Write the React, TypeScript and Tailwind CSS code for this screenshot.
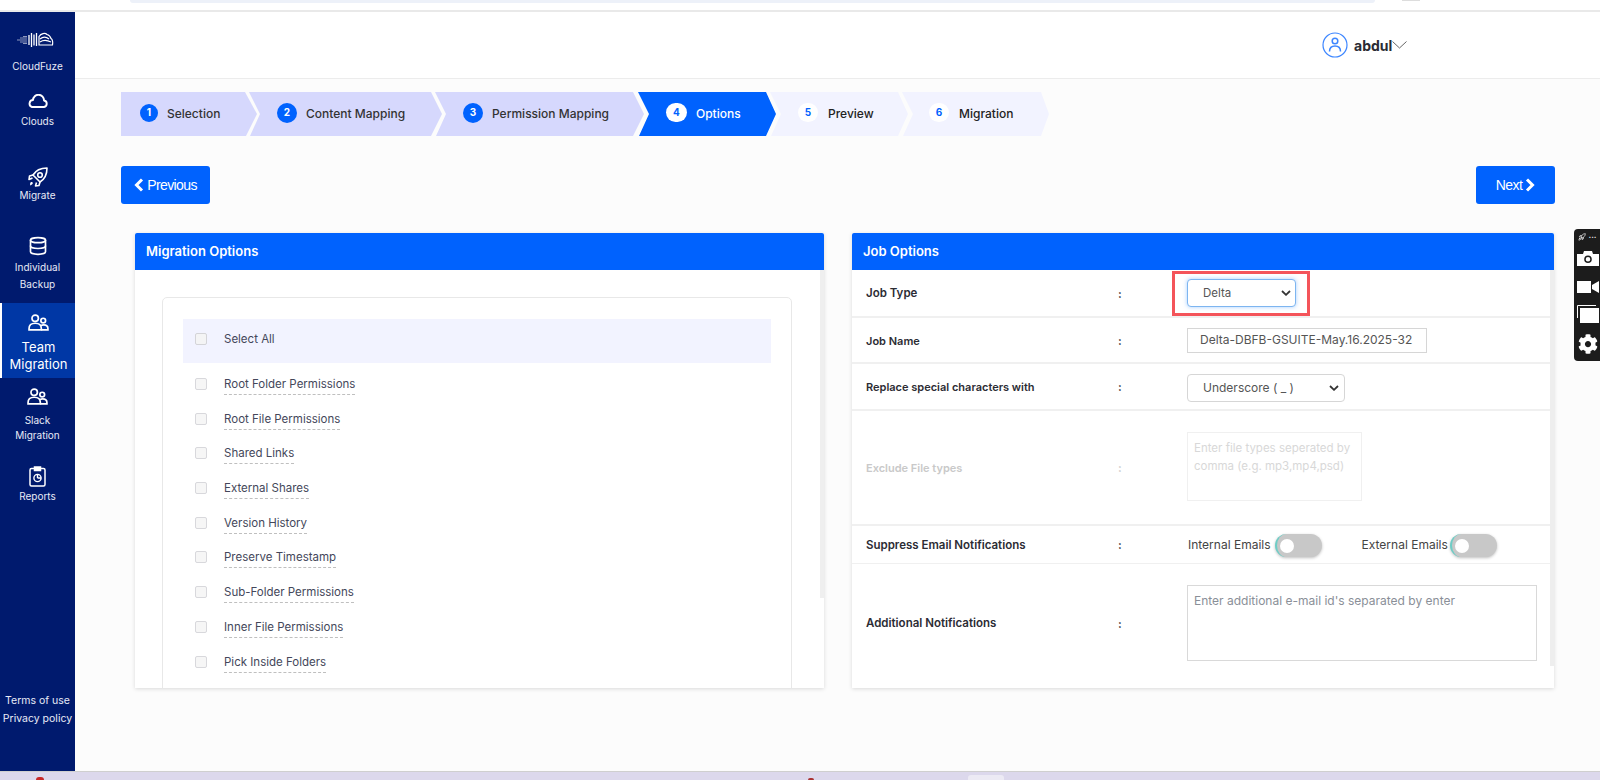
import { Database, Rocket } from "lucide-react";
import { FaCog } from "react-icons/fa";

const steps = [
  { n: 1, label: "Selection", cls: "w-[136px] pl-[19px] bg-[#d6d8fd] [clip-path:polygon(0_0,124px_0,136px_50%,125px_100%,0_100%)]", badge: "w-[18px] h-[18px] bg-[#0062fe] text-white", gap: "ml-[9px]", text: "text-[#333]" },
  { n: 2, label: "Content Mapping", cls: "w-[193px] -ml-[8px] pl-[28px] bg-[#d6d8fd] [clip-path:polygon(0_0,182px_0,193px_50%,182px_100%,1px_100%,11px_50%)]", badge: "w-[20px] h-[20px] bg-[#0062fe] text-white", gap: "ml-[9px]", text: "text-[#333]" },
  { n: 3, label: "Permission Mapping", cls: "w-[209px] -ml-[7px] pl-[28px] bg-[#d6d8fd] [clip-path:polygon(0_0,198px_0,209px_50%,198px_100%,1px_100%,11px_50%)]", badge: "w-[20px] h-[20px] bg-[#0062fe] text-white", gap: "ml-[9px]", text: "text-[#333]" },
  { n: 4, label: "Options", cls: "w-[138px] -ml-[6px] pl-[28px] bg-[#0062fe] [clip-path:polygon(0_0,128px_0,138px_50%,128px_100%,1px_100%,11px_50%)]", badge: "w-[21px] h-[19px] bg-white text-[#0062fe]", gap: "ml-[9px]", text: "text-white" },
  { n: 5, label: "Preview", cls: "w-[138px] -ml-[6px] pl-[28px] bg-[#f2f3ff] [clip-path:polygon(0_0,128px_0,138px_50%,128px_100%,1px_100%,11px_50%)]", badge: "w-[20px] h-[19px] bg-white text-[#0062fe]", gap: "ml-[10px]", text: "text-[#222]" },
  { n: 6, label: "Migration", cls: "w-[147px] -ml-[6px] pl-[27px] bg-[#f2f3ff] [clip-path:polygon(0_0,139px_0,147px_50%,139px_100%,1px_100%,11px_50%)]", badge: "w-[20px] h-[19px] bg-white text-[#0062fe]", gap: "ml-[10px]", text: "text-[#222]" },
];

const options = [
  "Root Folder Permissions",
  "Root File Permissions",
  "Shared Links",
  "External Shares",
  "Version History",
  "Preserve Timestamp",
  "Sub-Folder Permissions",
  "Inner File Permissions",
  "Pick Inside Folders",
];

function Logo() {
  return (
    <svg className="mr-[6px]" width="38" height="16" viewBox="0 0 38 16" fill="none" stroke="white" strokeWidth="1">
      <path d="M1 8h10M4 6h7M4 10h7M7 4.500h4M7 11.500h4" strokeWidth="0.7" opacity="0.8" />
      <path d="M13 3v10M15.500 1v14M18 2.500v11M20.500 1v13" strokeWidth="1.300" />
      <path d="M23 13V4.500C25 1.500 29 0.500 31 2.500c2 0.500 3.500 2.500 4 4 1.500 1 2 3.500 1.500 6.500z" strokeWidth="1.200" />
      <path d="M24 7c3-2.500 6-2.500 9 0M24 10c3-2 7-2 11 0" strokeWidth="1.100" />
    </svg>
  );
}

function CloudIcon() {
  return (
    <svg width="21" height="14" viewBox="0 0 21 14" fill="none" stroke="white" strokeWidth="1.900" strokeLinejoin="round">
      <path d="M5 13h12a3.300 3.300 0 0 0 0-6.500A5.500 5.500 0 0 0 6 6 3.600 3.600 0 0 0 5 13z" />
    </svg>
  );
}

function RocketIcon() {
  return (
    <svg width="20" height="20" viewBox="0 0 20 20" fill="none" stroke="white" strokeWidth="1.600" strokeLinejoin="round">
      <path d="M19 1C13 1 8 3 5 8l7 7c5-3 7-8 7-14z" />
      <circle cx="12" cy="8" r="2.300" />
      <path d="M5 8L1.500 9 1 12.500 4.500 11M12 15l-1 3.500-3.500.5 1-3.500" />
      <path d="M2.500 15.500c1-.8 2-.5 2.300.2.300.700-.3 1.800-2.800 2.800.4-1.200-.2-2 .5-3z" fill="white" stroke="none" />
    </svg>
  );
}

function TeamIcon() {
  return (
    <svg width="21" height="17" viewBox="0 0 22 18" fill="none" stroke="white" strokeWidth="1.800">
      <circle cx="7.500" cy="4.500" r="3.400" />
      <circle cx="16" cy="7" r="2.500" />
      <path d="M1 16.800v-1.500c0-3.500 2.500-5.500 6.500-5.500s6.500 2 6.500 5.500v1.500z" />
      <path d="M14 16.800h7v-1.300c0-2.500-1.800-4-4.500-4-1.200 0-2.200 0.300-3 0.800" />
    </svg>
  );
}

function ReportIcon() {
  return (
    <svg width="17" height="21" viewBox="0 0 17 21" fill="none" stroke="white" strokeWidth="1.500">
      <rect x="1" y="2.500" width="15" height="17.500" rx="1.500" />
      <path d="M5.500 1h6v3.500h-6z" fill="white" />
      <circle cx="8.500" cy="12" r="3.600" strokeWidth="1.400" />
      <path d="M8.500 12V8.400M8.500 12h3.600" strokeWidth="1.400" />
    </svg>
  );
}

function SideItem({ icon, lines, cls }: { icon: React.ReactNode; lines: string[]; cls: string }) {
  return (
    <div className={`flex flex-col items-center text-white ${cls}`}>
      {icon}
      <div className="flex flex-col items-center text-[10px] text-[#e8eaf6]">
        {lines.map((line) => (
          <span key={line}>{line}</span>
        ))}
      </div>
    </div>
  );
}

function Sidebar() {
  return (
    <aside className="w-[75px] h-full bg-[#001a6e] flex flex-col shrink-0">
      <SideItem icon={<Logo />} lines={["CloudFuze"]} cls="pt-[20px] h-[77px] gap-[10px] leading-[17px]" />
      <SideItem icon={<CloudIcon />} lines={["Clouds"]} cls="pt-[5px] h-[70px] gap-[5px] leading-[17px]" />
      <SideItem icon={<RocketIcon />} lines={["Migrate"]} cls="pt-[8px] h-[62px] leading-[17px]" />
      <SideItem icon={<Database size={20} strokeWidth={2} />} lines={["Individual", "Backup"]} cls="pt-[15px] h-[82px] gap-[3px] leading-[17px]" />
      <div className="h-[75px] bg-[#0037a5] border-l-2 border-white flex flex-col items-center pt-[11px] text-white">
        <TeamIcon />
        <span className="text-[13px] leading-[17px] mt-[8px]">Team</span>
        <span className="text-[13px] leading-[17px]">Migration</span>
      </div>
      <SideItem icon={<TeamIcon />} lines={["Slack", "Migration"]} cls="pt-[10px] h-[75px] gap-[8px] leading-[15px]" />
      <SideItem icon={<ReportIcon />} lines={["Reports"]} cls="pt-[13px] h-[70px] gap-[1px] leading-[17px]" />
      <div className="mt-auto mb-[43px] flex flex-col items-center text-[10.500px] leading-[18px] text-[#e8eaf6]">
        <span>Terms of use</span>
        <span>Privacy policy</span>
      </div>
    </aside>
  );
}

function Header() {
  return (
    <header className="h-[67px] bg-white border-b border-[#ececec] flex items-center pl-[1247px]">
      <svg width="26" height="26" viewBox="0 0 26 26" fill="none" stroke="#3d86ff" strokeWidth="1.200">
        <circle cx="13" cy="13" r="12" />
        <circle cx="13" cy="9" r="2.800" strokeWidth="1.500" />
        <path d="M7.500 19.500c0-3.500 2-5.500 5.500-5.500s5.500 2 5.500 5.500" strokeWidth="1.500" />
      </svg>
      <span className="ml-[6px] text-[14px] font-bold text-[#2b2b33]">abdul</span>
      <svg width="15" height="8" viewBox="0 0 15 8" fill="none" stroke="#666" strokeWidth="1">
        <path d="M0.500 0.500L7.500 7L14.500 0.500" />
      </svg>
    </header>
  );
}

function Stepper() {
  return (
    <div className="flex ml-[46px] mt-[13px] h-[44px]">
      {steps.map((s) => (
        <div key={s.n} className={`h-full flex items-center ${s.cls}`}>
          <span className={`rounded-full flex items-center justify-center text-[10px] font-bold -mt-[3px] shrink-0 ${s.badge}`}>{s.n}</span>
          <span className={`text-[12px] font-medium whitespace-nowrap ${s.gap} ${s.text}`}>{s.label}</span>
        </div>
      ))}
    </div>
  );
}

function Chevron() {
  return (
    <svg width="10" height="6" viewBox="0 0 10 6" fill="none" stroke="#333" strokeWidth="1.800">
      <path d="M1 1l4 3.800L9 1" />
    </svg>
  );
}

function NavButton({ dir, label, cls }: { dir: "left" | "right"; label: string; cls: string }) {
  const arrow = (
    <svg width="10" height="14" viewBox="0 0 10 14" fill="none" stroke="white" strokeWidth="3">
      <path d={dir === "left" ? "M8 1.500L2.500 7L8 12.500" : "M2 1.500L7.500 7L2 12.500"} />
    </svg>
  );
  return (
    <button className={`h-[38px] bg-[#0062fe] rounded-[3px] text-white text-[14px] tracking-[-0.6px] font-['Liberation_Sans',sans-serif] flex items-center justify-center gap-[3px] ${cls}`}>
      {dir === "left" && arrow}
      {label}
      {dir === "right" && arrow}
    </button>
  );
}

function Panel({ title, cls, children }: { title: string; cls: string; children: React.ReactNode }) {
  return (
    <section className={`h-[455px] bg-white shadow-[0_1px_4px_rgba(0,0,0,0.14)] overflow-hidden relative ${cls}`}>
      <div className="h-[37px] bg-[#0062fe] rounded-t-[2px] flex items-center pl-[11px] text-[13px] font-semibold text-white">{title}</div>
      {children}
    </section>
  );
}

function MigrationOptions() {
  return (
    <Panel title="Migration Options" cls="w-[689px]">
      <div className="ml-[27px] mt-[27px] w-[630px] h-[420px] border border-[#e8e8e8] rounded-t-[5px] pt-[21px] pl-[20px]">
        <div className="w-[588px] h-[44px] bg-[#f2f3ff] flex items-center pl-[12px] pb-[2px]">
          <span className="w-[12px] h-[12px] rounded-[2px] border border-[#d4d4d8] bg-[#f4f4f5] -mt-[2px]" />
          <span className="ml-[17px] text-[11.500px] text-[#44475a]">Select All</span>
        </div>
        <div className="pt-[12px] pl-[12px] flex flex-col">
          {options.map((opt) => (
            <div key={opt} className="h-[34.700px] flex items-start">
              <span className="mt-[3px] w-[12px] h-[12px] rounded-[2px] border border-[#d8d8dc] bg-[#f6f6f6]" />
              <span className="ml-[17px] mt-[1px] text-[11.500px] leading-[17px] text-[#44475a] pb-[1px] border-b-[1.500px] border-dashed border-[#bfbfbf]">{opt}</span>
            </div>
          ))}
        </div>
      </div>
      <div className="absolute right-0 top-[37px] w-[4px] h-[328px] bg-[#efefef]" />
    </Panel>
  );
}

function JobRow({ label, cls, labelCls, muted, children }: { label: string; cls: string; labelCls: string; muted?: boolean; children: React.ReactNode }) {
  const tone = muted ? "text-[#c9c9c9]" : "text-[#2c2c34]";
  return (
    <div className={`flex items-center pl-[14px] border-b-2 border-[#f0f0f0] ${cls}`}>
      <span className={`w-[252px] font-semibold shrink-0 pt-[2px] ${labelCls} ${tone}`}>{label}</span>
      <span className={`w-[69px] text-[11px] font-bold shrink-0 pt-[2px] ${tone}`}>:</span>
      {children}
    </div>
  );
}

function Toggle() {
  return (
    <span className="w-[47px] h-[23px] rounded-full bg-[#c8c8c8] border-l-2 border-[#6fcdc6] shadow-[0_1px_3px_rgba(0,0,0,0.25)] flex items-center pl-[3px]">
      <span className="w-[14px] h-[14px] rounded-full bg-white" />
    </span>
  );
}

function JobOptions() {
  return (
    <Panel title="Job Options" cls="w-[702px]">
      <div className="mr-[3px]">
        <JobRow label="Job Type" labelCls="text-[11.500px]" cls="h-[48px]">
          <div className="-ml-[15px] w-[138px] h-[45px] border-[3px] border-[#f4545a] flex items-center pl-[12px]">
            <div className="w-[109px] h-[28px] bg-white rounded-[4px] border border-[#7db5f0] shadow-[0_0_4px_rgba(80,160,255,0.5)] flex items-center justify-between pl-[15px] pr-[4px]">
              <span className="text-[11.500px] text-[#555] pt-[1px]">Delta</span>
              <Chevron />
            </div>
          </div>
        </JobRow>
        <JobRow label="Job Name" labelCls="text-[11px]" cls="h-[46px]">
          <div className="w-[240px] h-[25px] border border-[#d6d6d6] flex items-center pl-[12px] text-[12px] text-[#555]">Delta-DBFB-GSUITE-May.16.2025-32</div>
        </JobRow>
        <JobRow label="Replace special characters with" labelCls="text-[11px]" cls="h-[47px]">
          <div className="mt-[2px] w-[158px] h-[28px] rounded-[4px] border border-[#d6d6d6] flex items-center justify-between pl-[15px] pr-[5px]">
            <span className="text-[12px] text-[#555]">Underscore ( _ )</span>
            <Chevron />
          </div>
        </JobRow>
        <JobRow label="Exclude File types" labelCls="text-[11px]" cls="h-[115px]" muted>
          <div className="w-[175px] h-[69px] border border-[#f0f0f0] px-[6px] pt-[6px] text-[11.500px] leading-[18px] text-[#d8d8d8] -mt-[2px]">Enter file types seperated by comma (e.g. mp3,mp4,psd)</div>
        </JobRow>
        <JobRow label="Suppress Email Notifications" labelCls="text-[11.500px]" cls="h-[38px] !border-b">
          <span className="text-[12px] text-[#444] ml-[1px] pt-[1px]">Internal Emails</span>
          <span className="ml-[4px] pt-[2px]"><Toggle /></span>
          <span className="ml-[40px] text-[12px] text-[#444] pt-[1px]">External Emails</span>
          <span className="ml-[2px] pt-[2px]"><Toggle /></span>
        </JobRow>
        <div className="flex items-center pl-[14px] h-[120px] pb-[3px]">
          <span className="w-[252px] pt-[3px] text-[11.500px] font-semibold text-[#2c2c34] shrink-0">Additional Notifications</span>
          <span className="w-[69px] pt-[3px] text-[11px] font-bold text-[#2c2c34] shrink-0">:</span>
          <div className="w-[350px] h-[76px] border border-[#d9d9d9] px-[6px] pt-[6px] text-[12px] text-[#8a8f98]">Enter additional e-mail id's separated by enter</div>
        </div>
      </div>
      <div className="absolute right-0 top-[37px] w-[4px] h-[396px] bg-[#eeeeee]" />
    </Panel>
  );
}

function RecorderBar() {
  return (
    <div className="absolute right-0 top-[229px] w-[26px] h-[132px] bg-[#1c1c1c] rounded-l-[4px] flex flex-col items-center pl-[1px] pt-[3px] text-white">
      <div className="flex items-center gap-[2px] h-[10px]">
        <Rocket size={8} strokeWidth={2} />
        <span className="text-[8px] leading-none tracking-[0px] font-bold">···</span>
      </div>
      <svg className="mt-[9px]" width="22" height="15" viewBox="0 0 22 15" fill="white">
        <path fillRule="evenodd" d="M0 3h6l1-3h8l1 3h6v12H0zM11 4.500a3.800 3.800 0 1 0 0 7.600a3.800 3.800 0 0 0 0-7.600zM11 6a2.300 2.300 0 1 1 0 4.600a2.300 2.300 0 0 1 0-4.600z" />
      </svg>
      <svg className="mt-[14px]" width="22" height="14" viewBox="0 0 22 14" fill="white">
        <path d="M0 1h14v12H0zM15 5l7-4v12l-7-4z" />
      </svg>
      <svg className="mt-[11px]" width="22" height="18" viewBox="0 0 22 18" fill="none" stroke="white" strokeWidth="1">
        <path d="M0.500 13V0.500H19" />
        <rect x="3" y="3" width="19" height="15" fill="white" stroke="none" />
      </svg>
      <FaCog className="mt-[11px]" size={20} />
    </div>
  );
}

export default function App() {
  return (
    <div className="relative w-[1600px] h-[780px] overflow-hidden bg-white flex flex-col font-['Inter',sans-serif]">
      <div className="h-[12px] shrink-0 border-b-2 border-[#e9e9e9] flex items-start">
        <div className="ml-[130px] w-[1245px] h-[3px] rounded-b-[10px] bg-[#edf1f9]" />
        <div className="ml-[27px] w-[18px] h-[1px] bg-[#ddd]" />
      </div>
      <div className="flex flex-1 min-h-0">
        <Sidebar />
        <main className="flex-1 bg-[#fcfcfc] min-w-0">
          <Header />
          <Stepper />
          <div className="flex justify-between pl-[46px] pr-[45px] mt-[30px]">
            <NavButton dir="left" label="Previous" cls="w-[89px]" />
            <NavButton dir="right" label="Next" cls="w-[79px]" />
          </div>
          <div className="flex pl-[60px] mt-[29px] gap-[28px]">
            <MigrationOptions />
            <JobOptions />
          </div>
        </main>
      </div>
      <div className="h-[9px] shrink-0 bg-[#dcd8ec] border-t border-[#cfcfcf] flex items-end">
        <span className="ml-[36px] w-[8px] h-[3px] rounded-t-full bg-[#c62828]" />
        <span className="ml-[764px] w-[6px] h-[2px] rounded-t-full bg-[#a33]" />
        <span className="ml-[154px] w-[36px] h-[5px] rounded-t-[3px] bg-[#eceaf4]" />
      </div>
      <RecorderBar />
    </div>
  );
}
